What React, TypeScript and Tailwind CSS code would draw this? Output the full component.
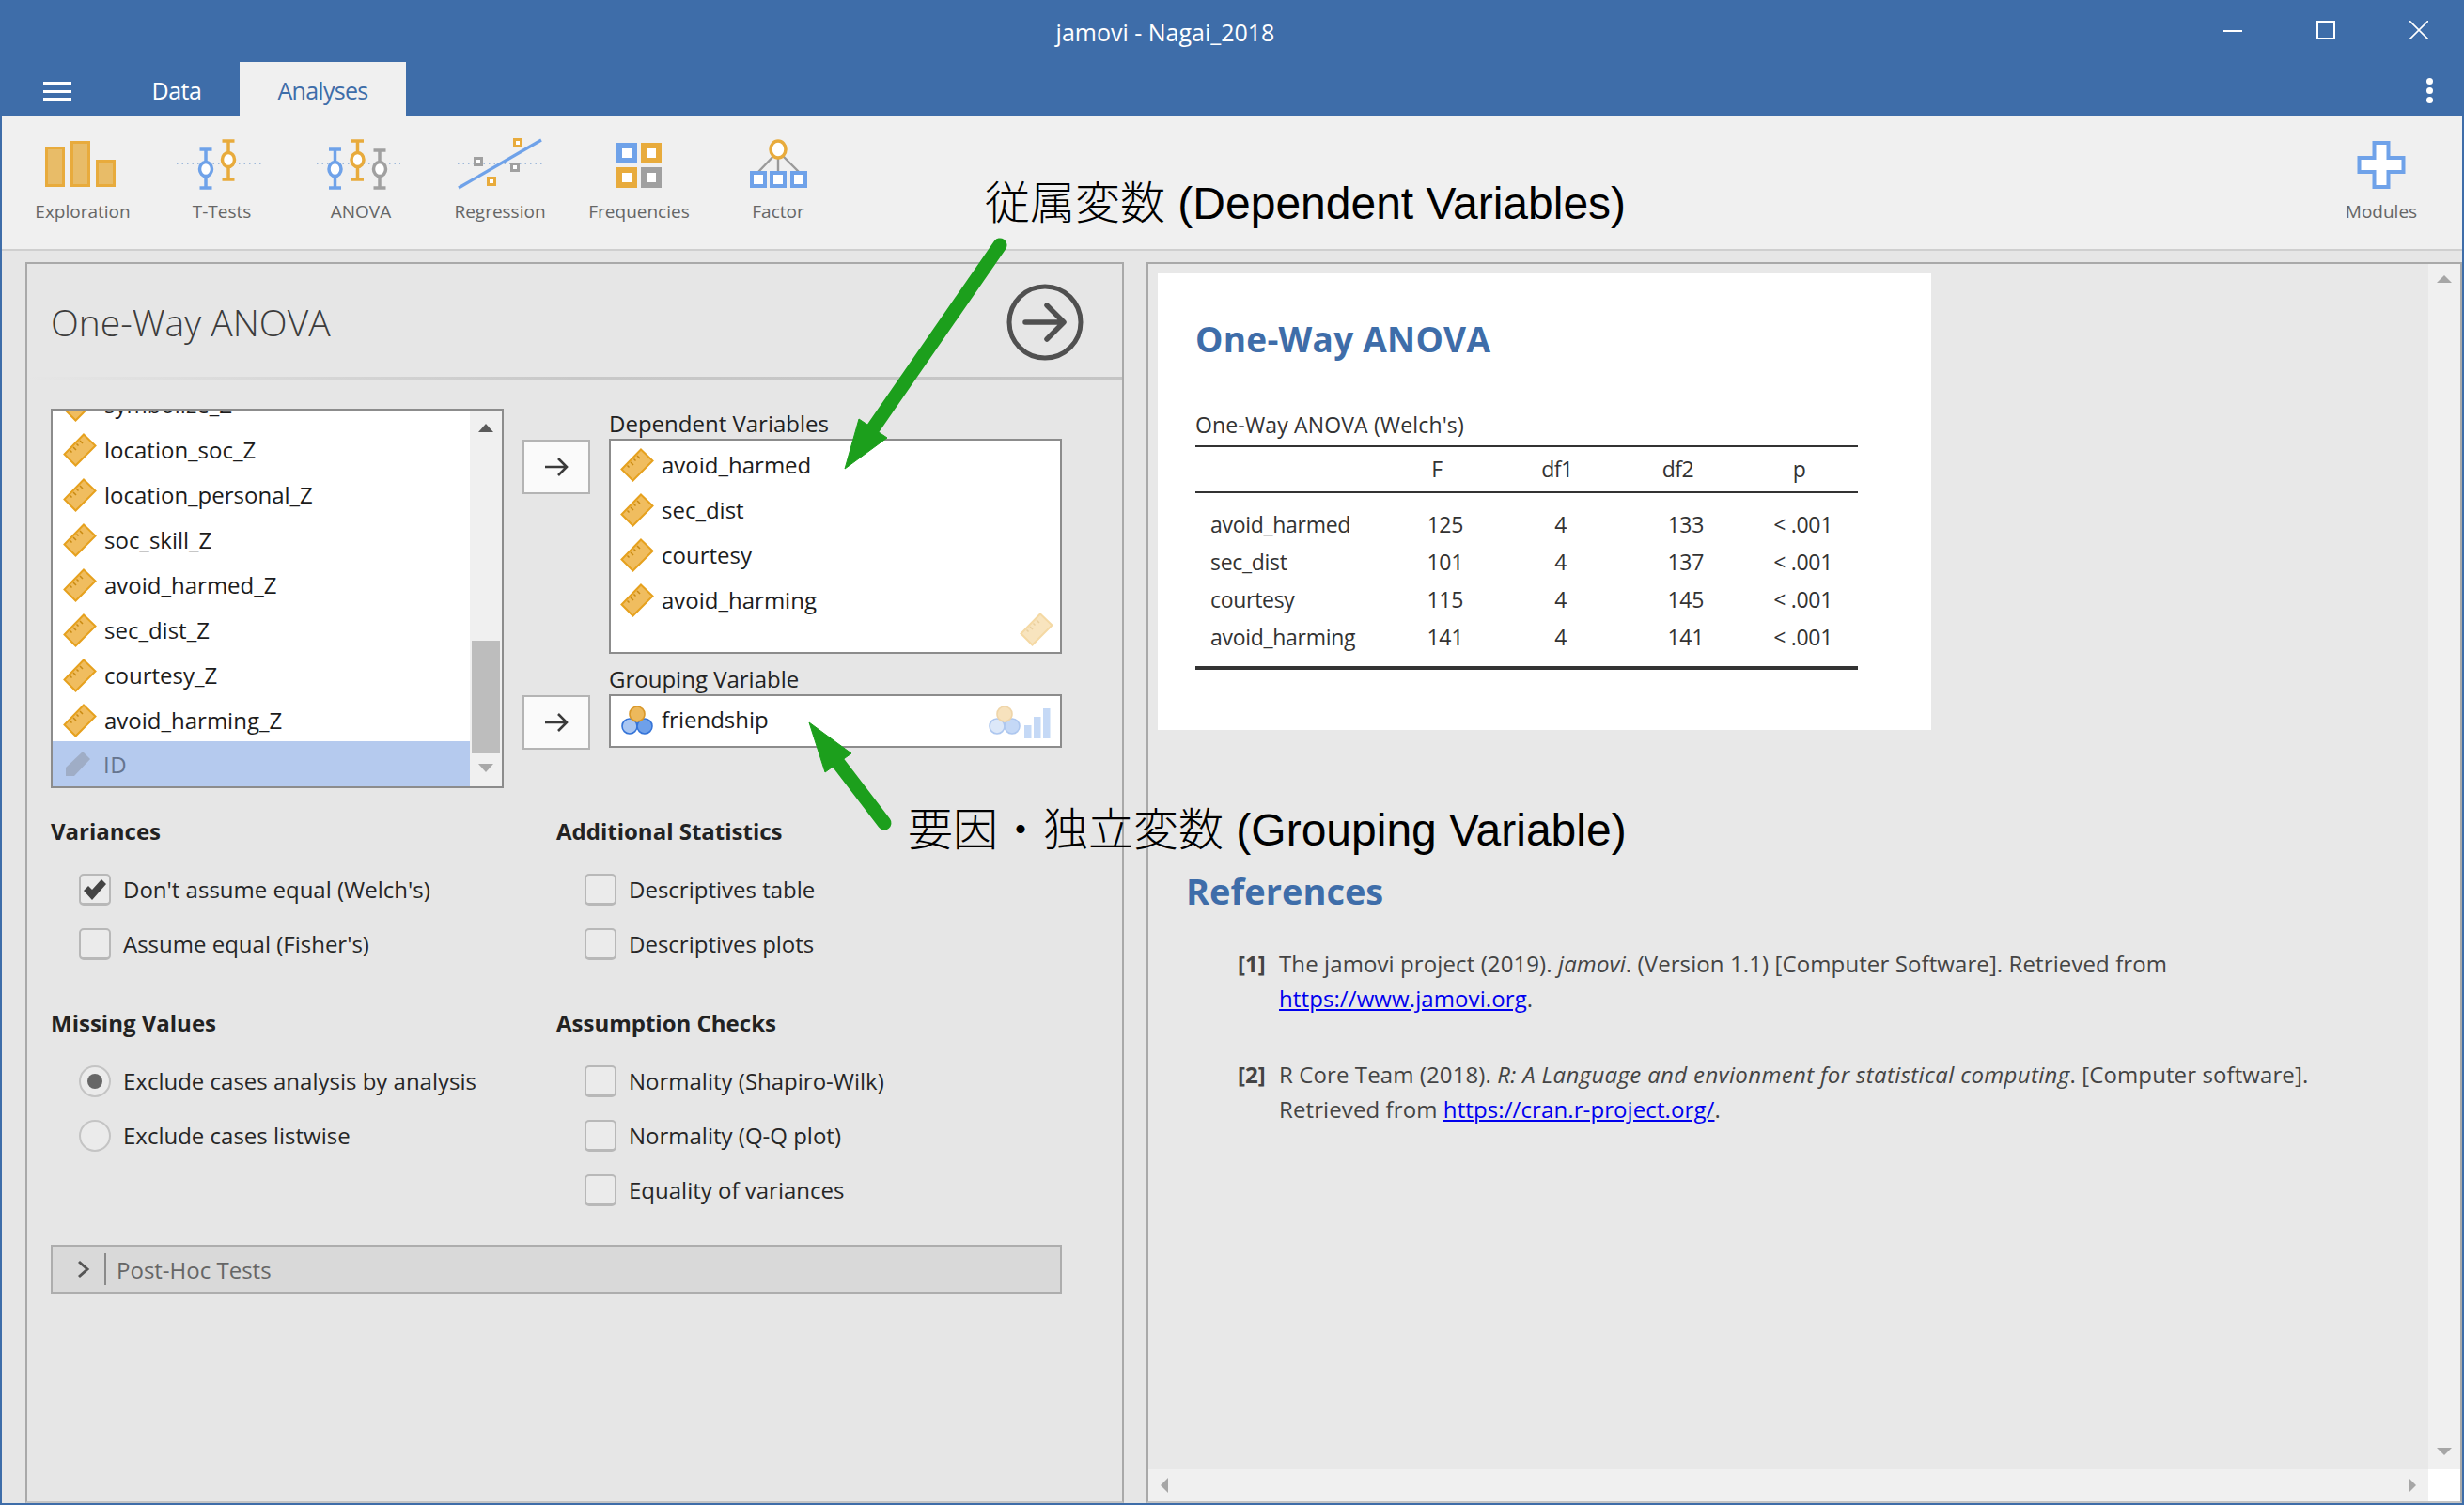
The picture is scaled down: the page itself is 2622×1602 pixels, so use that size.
import React from "react";

const Ruler = ({ faint = false }: { faint?: boolean }) => (
  <svg width="36" height="36" viewBox="0 0 36 36" className={faint ? "opacity-40 shrink-0" : "shrink-0"}>
    <path d="M22 1.5 L34.5 13.5 L13.5 34.5 L1.5 22.5 Z" fill="#f0bd5f" stroke="#e6a11e" strokeWidth="2" />
    <path d="M18 8 l3 3 M14.5 11.5 l2 2 M11 15 l3 3 M7.5 18.5 l2 2" stroke="#c98a12" strokeWidth="1.5" fill="none" />
  </svg>
);

const IdTag = () => (
  <svg width="30" height="30" viewBox="0 0 30 30" className="shrink-0">
    <path d="M20 1 L28 9 L11 27 H2 V18 Z" fill="#9fadc6" />
  </svg>
);

const Nominal = ({ faint = false }: { faint?: boolean }) => (
  <svg width="36" height="36" viewBox="0 0 36 36" className={faint ? "opacity-40 shrink-0" : "shrink-0"}>
    <circle cx="10" cy="23" r="8" fill="#a9c6f2" stroke="#3574d8" strokeWidth="1.6" />
    <circle cx="26" cy="23" r="8" fill="#6ea0ea" stroke="#3574d8" strokeWidth="1.6" />
    <circle cx="18" cy="10" r="8" fill="#edb95c" stroke="#d9982a" strokeWidth="1.6" />
  </svg>
);

const Row = ({ name }: { name: string }) => (
  <div className="h-[48px] flex items-center pl-[11px] shrink-0">
    <Ruler />
    <span className="ml-[8px] text-[24px] text-[#1c1c1c]">{name}</span>
  </div>
);

const ArrowBtn = ({ className }: { className: string }) => (
  <div className={`w-[72px] h-[58px] border-2 border-[#b4b4b4] bg-[#fafafa] flex items-center justify-center ${className}`}>
    <svg width="26" height="24" viewBox="0 0 26 24" fill="none" stroke="#3a3a3a" strokeWidth="2.6">
      <path d="M1 12 H24 M15 3 L24 12 L15 21" />
    </svg>
  </div>
);

const Check = ({ label, on = false }: { label: string; on?: boolean }) => (
  <div className="h-[58px] flex items-center pl-[30px]">
    <div className="w-[34px] h-[34px] rounded-[5px] border-2 border-b-[3px] border-[#b8b8b8] bg-[#ebebeb] flex items-center justify-center shrink-0">
      {on && (
        <svg width="26" height="24" viewBox="0 0 26 24">
          <path d="M1 13 L6 8 L10 12 L20 1 L25 6 L10 23 Z" fill="#444444" />
        </svg>
      )}
    </div>
    <span className="ml-[13px] text-[24px] text-[#262626]">{label}</span>
  </div>
);

const Radio = ({ label, on = false }: { label: string; on?: boolean }) => (
  <div className="h-[58px] flex items-center pl-[30px]">
    <div className="w-[34px] h-[34px] rounded-full border-2 border-[#c4c4c4] bg-[#ebebeb] flex items-center justify-center shrink-0">
      {on && <div className="w-[16px] h-[16px] rounded-full bg-[#666666]" />}
    </div>
    <span className="ml-[13px] text-[24px] text-[#262626]">{label}</span>
  </div>
);

const Heading = ({ children }: { children: React.ReactNode }) => (
  <div className="h-[30px] leading-[30px] mb-[18px] text-[24px] font-bold text-[#222222]">{children}</div>
);

const ToolBtn = ({ label, children }: { label: string; children: React.ReactNode }) => (
  <div className="w-[148px] flex flex-col items-center shrink-0">
    <svg width="96" height="60" viewBox="0 0 96 60" className="shrink-0">{children}</svg>
    <span className="mt-[7px] text-[19px] leading-[24px] text-[#666666]">{label}</span>
  </div>
);

const BLUE = "#6fa2e9";
const ORG = "#e8ab3c";
const GRY = "#a0a0a0";

const Pin = ({ x, top, bot, cy, c }: { x: number; top: number; bot: number; cy: number; c: string }) => (
  <g>
    <path d={`M${x - 6.5} ${top} H${x + 6.5} M${x - 6.5} ${bot} H${x + 6.5} M${x} ${top} V${bot}`} stroke={c} strokeWidth="3.5" fill="none" />
    <ellipse cx={x} cy={cy} rx="6.5" ry="7.5" fill="#ffffff" stroke={c} strokeWidth="3.5" />
  </g>
);

const Sq = ({ x, y, c, s = 10, w = 3 }: { x: number; y: number; c: string; s?: number; w?: number }) => (
  <rect x={x + w / 2} y={y + w / 2} width={s - w} height={s - w} fill="#ffffff" stroke={c} strokeWidth={w} />
);

const Dotted = ({ a, b }: { a: number; b: number }) => (
  <path d={`M${a} 28 H${b}`} stroke="#4f82c4" strokeWidth="1.2" strokeDasharray="1.5 4" fill="none" />
);

const rows = [
  ["avoid_harmed", "125", "133"],
  ["sec_dist", "101", "137"],
  ["courtesy", "115", "145"],
  ["avoid_harming", "141", "141"],
];

export default function App() {
  return (
    <div
      className="relative w-[2622px] h-[1602px] overflow-hidden bg-[#3e6da9] flex flex-col"
      style={{ fontFamily: '"Open Sans", "Noto Sans CJK JP", sans-serif' }}
    >
      {/* title bar */}
      <div className="h-[66px] flex items-center shrink-0 relative">
        <div className="flex-1 text-center text-white text-[25px] pr-[142px] mt-[4px]">jamovi - Nagai_2018</div>
        <div className="absolute right-[38px] top-[22px] flex items-start gap-[79px]">
          <div className="w-[20px] h-[2px] bg-white mt-[10px]" />
          <div className="w-[20px] h-[20px] border-2 border-white" />
          <svg width="20" height="20" viewBox="0 0 20 20" stroke="#ffffff" strokeWidth="1.6"><path d="M0 0 L20 20 M20 0 L0 20" /></svg>
        </div>
      </div>
      {/* tabs */}
      <div className="h-[57px] flex shrink-0 relative">
        <div className="w-[30px] h-[20px] ml-[46px] mt-[21px] flex flex-col justify-between">
          <div className="h-[3px] bg-white" /><div className="h-[3px] bg-white" /><div className="h-[3px] bg-white" />
        </div>
        <div className="ml-[74px] w-[76px] text-white text-[25px] leading-[60px] tracking-[-0.5px] text-center">Data</div>
        <div className="ml-[29px] w-[177px] bg-[#f0f0f0] text-[#3e6da9] text-[25px] leading-[60px] text-center tracking-[-0.7px]">Analyses</div>
        <div className="absolute right-[33px] top-[17px] flex flex-col gap-[3px]">
          <div className="w-[7px] h-[7px] rounded-full bg-white" /><div className="w-[7px] h-[7px] rounded-full bg-white" /><div className="w-[7px] h-[7px] rounded-full bg-white" />
        </div>
      </div>
      {/* toolbar */}
      <div className="h-[144px] mx-[2px] bg-[#f0f0f0] border-b-2 border-[#cfcfcf] flex pl-[12px] pt-[23px] shrink-0">
        <ToolBtn label="Exploration">
          <g fill="#e8bc68" stroke={ORG} strokeWidth="3">
            <rect x="9.5" y="11.5" width="18" height="40" />
            <rect x="36.5" y="5.5" width="18" height="46" />
            <rect x="63.5" y="25.5" width="18" height="26" />
          </g>
        </ToolBtn>
        <ToolBtn label="T-Tests">
          <Dotted a={0} b={91} />
          <Pin x={31} top={13} bot={54} cy={34} c={BLUE} />
          <Pin x={55} top={4} bot={45} cy={24} c={ORG} />
        </ToolBtn>
        <ToolBtn label="ANOVA">
          <Dotted a={1} b={90} />
          <Pin x={20.5} top={13} bot={54} cy={34} c={BLUE} />
          <Pin x={44.5} top={4} bot={45} cy={24} c={ORG} />
          <Pin x={68} top={14} bot={54} cy={34} c={GRY} />
        </ToolBtn>
        <ToolBtn label="Regression">
          <Dotted a={3} b={93} />
          <path d="M4 54 L92 3" stroke={BLUE} strokeWidth="3.2" fill="none" />
          <Sq x={62} y={1} c={ORG} />
          <Sq x={20} y={21} c={GRY} />
          <Sq x={59} y={27} c={GRY} />
          <Sq x={34} y={42} c={ORG} />
        </ToolBtn>
        <ToolBtn label="Frequencies">
          <Sq x={24} y={6} c={BLUE} s={22} w={6} />
          <Sq x={50} y={6} c={ORG} s={22} w={6} />
          <Sq x={24} y={32} c={ORG} s={22} w={6} />
          <Sq x={50} y={32} c={GRY} s={22} w={6} />
        </ToolBtn>
        <ToolBtn label="Factor">
          <path d="M48 15 L27 37 M48 15 V37 M48 15 L70 37" stroke="#9a9a9a" strokeWidth="2.4" fill="none" />
          <ellipse cx="48" cy="13" rx="8" ry="9" fill="#ffffff" stroke={ORG} strokeWidth="3.5" />
          <Sq x={18} y={36} c={BLUE} s={18} w={4} />
          <Sq x={39} y={36} c={BLUE} s={18} w={4} />
          <Sq x={61} y={36} c={BLUE} s={18} w={4} />
        </ToolBtn>
        <div className="ml-auto mr-[12px]">
          <ToolBtn label="Modules">
            <path d="M40.5 7 H55.5 V23 H71.5 V38 H55.5 V54 H40.5 V38 H24.5 V23 H40.5 Z" transform="translate(0 -1)" fill="#ffffff" stroke={BLUE} strokeWidth="4" />
          </ToolBtn>
        </div>
      </div>
      {/* main */}
      <div className="flex-1 min-h-0 mx-[2px] mb-[2px] bg-[#e6e6e6] pt-[12px] pl-[25px] flex">
        {/* left panel */}
        <div className="w-[1169px] border-x-2 border-t-2 border-[#a9a9a9] border-b-2 border-b-[#c4c4c4] flex flex-col">
          <div className="h-[120px] flex items-center justify-between pl-[25px] pr-[41px] pt-[4px] shrink-0">
            <span className="text-[39px] text-[#3c3c3c] font-light mt-[1px]">One-Way ANOVA</span>
            <svg width="82" height="82" viewBox="0 0 82 82" fill="none" stroke="#505050">
              <circle cx="41" cy="41" r="38" strokeWidth="5" />
              <path d="M20 41 H60 M43 23 L61 41 L43 59" strokeWidth="5.5" strokeLinecap="round" strokeLinejoin="round" />
            </svg>
          </div>
          <div className="h-[4px] shrink-0 bg-gradient-to-r from-[#e6e6e6] via-[#c8c8c8] to-[#c4c4c4]" />
          <div className="pl-[25px] pt-[30px]">
            <div className="flex">
              {/* list */}
              <div className="w-[482px] h-[404px] border-2 border-[#8c8c8c] bg-white flex overflow-hidden">
                <div className="flex-1 overflow-hidden">
                  <div className="-mt-[30px] flex flex-col">
                    {["symbolize_Z", "location_soc_Z", "location_personal_Z", "soc_skill_Z", "avoid_harmed_Z", "sec_dist_Z", "courtesy_Z", "avoid_harming_Z"].map((n) => (
                      <Row key={n} name={n} />
                    ))}
                    <div className="h-[50px] -mt-[2px] bg-[#b5caee] flex items-center pl-[12px]">
                      <IdTag />
                      <span className="ml-[12px] text-[24px] tracking-[0.5px] text-[#66758f]">ID</span>
                    </div>
                  </div>
                </div>
                <div className="w-[34px] bg-[#f0f0f0] flex flex-col items-center shrink-0">
                  <div className="mt-[14px] w-0 h-0 border-x-[8px] border-x-transparent border-b-[9px] border-b-[#5a5a5a]" />
                  <div className="mt-[222px] w-[30px] h-[120px] bg-[#bdbdbd]" />
                  <div className="mt-[11px] w-0 h-0 border-x-[8px] border-x-transparent border-t-[9px] border-t-[#a8a8a8]" />
                </div>
              </div>
              {/* buttons */}
              <div className="ml-[20px] flex flex-col">
                <ArrowBtn className="mt-[33px]" />
                <ArrowBtn className="mt-[214px]" />
              </div>
              {/* targets */}
              <div className="ml-[20px] w-[482px] flex flex-col">
                <div className="h-[32px] leading-[32px] text-[24px] text-[#222222]">Dependent Variables</div>
                <div className="h-[229px] border-2 border-[#8c8c8c] bg-white relative pt-[2px]">
                  {["avoid_harmed", "sec_dist", "courtesy", "avoid_harming"].map((n) => (
                    <div key={n} className="h-[48px] flex items-center pl-[10px]">
                      <Ruler />
                      <span className="ml-[8px] text-[24px] text-[#1c1c1c]">{n}</span>
                    </div>
                  ))}
                  <div className="absolute right-[7px] bottom-[6px]"><Ruler faint /></div>
                </div>
                <div className="h-[43px] leading-[53px] text-[24px] text-[#222222]">Grouping Variable</div>
                <div className="h-[57px] border-2 border-[#8c8c8c] bg-white flex items-center pl-[10px] pr-[10px]">
                  <Nominal />
                  <span className="ml-[8px] text-[24px] text-[#1c1c1c] -mt-[4px]">friendship</span>
                  <div className="ml-auto flex items-end gap-[1px]">
                    <Nominal faint />
                    <svg width="30" height="32" viewBox="0 0 30 32" className="opacity-40">
                      <rect x="2" y="18" width="7.5" height="14" fill={BLUE} />
                      <rect x="12" y="9" width="7.5" height="23" fill={BLUE} />
                      <rect x="22" y="0" width="7.5" height="32" fill={BLUE} />
                    </svg>
                  </div>
                </div>
              </div>
            </div>
            {/* options */}
            <div className="grid grid-cols-[538px_1fr] mt-[31px]">
              <div>
                <Heading>Variances</Heading>
                <Check label="Don't assume equal (Welch's)" on />
                <Check label="Assume equal (Fisher's)" />
              </div>
              <div>
                <Heading>Additional Statistics</Heading>
                <Check label="Descriptives table" />
                <Check label="Descriptives plots" />
              </div>
              <div className="mt-[40px]">
                <Heading>Missing Values</Heading>
                <Radio label="Exclude cases analysis by analysis" on />
                <Radio label="Exclude cases listwise" />
              </div>
              <div className="mt-[40px]">
                <Heading>Assumption Checks</Heading>
                <Check label="Normality (Shapiro-Wilk)" />
                <Check label="Normality (Q-Q plot)" />
                <Check label="Equality of variances" />
              </div>
            </div>
            <div className="mt-[29px] w-[1076px] h-[52px] border-2 border-[#adadad] bg-[#d9d9d9] flex items-center">
              <svg width="14" height="20" viewBox="0 0 14 20" fill="none" stroke="#555555" strokeWidth="3" className="ml-[26px]"><path d="M2 2 L11 10 L2 18" /></svg>
              <div className="ml-[15px] w-[2px] h-[34px] bg-[#8a8a8a]" />
              <span className="ml-[11px] text-[24px] text-[#666666] mt-[1px]">Post-Hoc Tests</span>
            </div>
          </div>
        </div>
        {/* right panel */}
        <div className="ml-[24px] flex-1 border-l-2 border-t-2 border-r-2 border-[#a9a9a9] border-b-2 border-b-[#c4c4c4] flex flex-col min-w-0 bg-[#e8e8e8]">
          <div className="flex flex-1 min-h-0">
            <div className="flex-1 pl-[10px] pt-[10px] min-w-0">
              <div className="w-[823px] h-[486px] bg-white pl-[40px] pt-[45px]">
                <div className="h-[50px] leading-[50px] text-[37px] font-bold text-[#3e6da9] tracking-[0.25px]">One-Way ANOVA</div>
                <div className="mt-[51px] h-[30px] leading-[30px] text-[23px] text-[#333333] tracking-[0.15px]">One-Way ANOVA (Welch's)</div>
                <div className="mt-[7px] w-[705px] border-t-2 border-[#333333]">
                  <div className="grid grid-cols-[193px_128px_128px_129px_129px] h-[47px] items-center text-[23px] text-[#333333] text-center tracking-[-0.5px] border-b-2 border-[#333333] box-content">
                    <div /><div>F</div><div>df1</div><div>df2</div><div>p</div>
                  </div>
                  <div className="pt-[13px] pb-[11px]">
                    {rows.map((r) => (
                      <div key={r[0]} className="grid grid-cols-[193px_128px_128px_129px_129px] h-[40px] items-center text-[23px] text-[#333333] tracking-[-0.3px]">
                        <div className="pl-[16px] whitespace-nowrap">{r[0]}</div>
                        <div className="text-right pr-[36px]">{r[1]}</div>
                        <div className="text-right pr-[54px]">4</div>
                        <div className="text-right pr-[37px]">{r[2]}</div>
                        <div className="text-right pr-[29px]">&lt; .001</div>
                      </div>
                    ))}
                  </div>
                  <div className="h-[4px] bg-[#333333]" />
                </div>
              </div>
              <div className="ml-[30px] mt-[141px] h-[60px] leading-[60px] text-[38px] font-bold text-[#3e6da9]">References</div>
              <div className="ml-[85px] mt-[29px] text-[24px] leading-[37px] text-[#444444] tracking-[0.1px]">
                <div className="flex">
                  <span className="w-[44px] font-bold">[1]</span>
                  <div>The jamovi project (2019). <i>jamovi</i>. (Version 1.1) [Computer Software]. Retrieved from<br /><a className="text-[#0000ee] underline">https://www.jamovi.org</a>.</div>
                </div>
                <div className="flex mt-[44px]">
                  <span className="w-[44px] font-bold">[2]</span>
                  <div>R Core Team (2018). <i className="tracking-[0.35px]">R: A Language and envionment for statistical computing</i>. [Computer software].<br />Retrieved from <a className="text-[#0000ee] underline">https://cran.r-project.org/</a>.</div>
                </div>
              </div>
            </div>
            <div className="w-[34px] bg-[#f0f0f0] flex flex-col items-center justify-between py-[12px] shrink-0">
              <div className="w-0 h-0 border-x-[8px] border-x-transparent border-b-[8px] border-b-[#a6a6a6]" />
              <div className="w-0 h-0 border-x-[8px] border-x-transparent border-t-[8px] border-t-[#a6a6a6] mb-[3px]" />
            </div>
          </div>
          <div className="h-[34px] flex shrink-0">
            <div className="flex-1 bg-[#f0f0f0] flex items-center justify-between px-[13px]">
              <div className="w-0 h-0 border-y-[8px] border-y-transparent border-r-[8px] border-r-[#a6a6a6]" />
              <div className="w-0 h-0 border-y-[8px] border-y-transparent border-l-[8px] border-l-[#a6a6a6]" />
            </div>
            <div className="w-[34px] bg-white" />
          </div>
        </div>
      </div>
      {/* annotations */}
      <svg width="2622" height="1602" viewBox="0 0 2622 1602" className="absolute inset-0 pointer-events-none">
        <g fill="#1c9f1c" stroke="#1c9f1c">
          <path d="M1064 261 L929 456" strokeWidth="15" strokeLinecap="round" fill="none" />
          <path d="M899 499 L914 446 L944 466 Z" strokeWidth="1" />
          <path d="M941 876 L892 812" strokeWidth="15" strokeLinecap="round" fill="none" />
          <path d="M861 769 L878 822 L906 802 Z" strokeWidth="1" />
        </g>
      </svg>
      <div className="absolute left-[1048px] top-[187px] h-[60px] leading-[60px] text-[48px] font-light text-black whitespace-nowrap" style={{ fontFamily: '"Liberation Sans", "Noto Sans CJK JP", sans-serif' }}>従属変数 (Dependent Variables)</div>
      <div className="absolute left-[966px] top-[854px] h-[60px] leading-[60px] text-[48px] font-light text-black whitespace-nowrap" style={{ fontFamily: '"Liberation Sans", "Noto Sans CJK JP", sans-serif' }}>要因・独立変数 (Grouping Variable)</div>
    </div>
  );
}
